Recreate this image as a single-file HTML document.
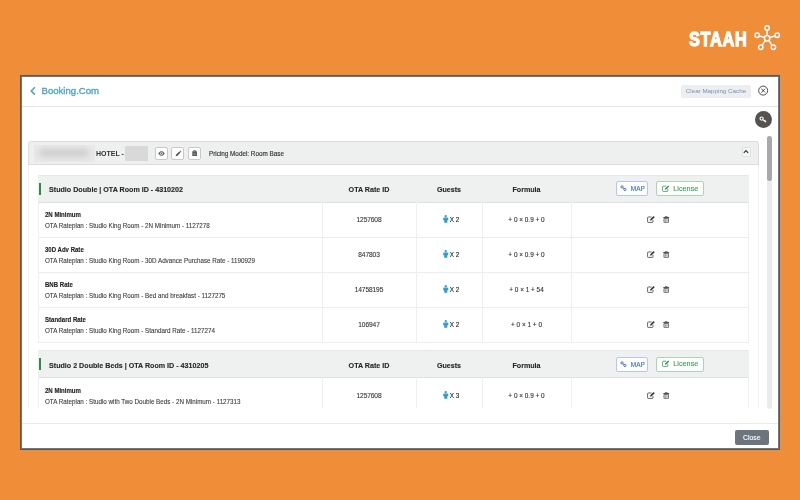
<!DOCTYPE html>
<html><head><meta charset="utf-8">
<style>
*{box-sizing:border-box;margin:0;padding:0}
html,body{width:800px;height:500px;overflow:hidden}
body{will-change:transform;background:#f08d38;font-family:"Liberation Sans",sans-serif;position:relative;color:#333}
.a{position:absolute}
.t{position:absolute;white-space:nowrap;line-height:10px;height:10px}
.bold{font-weight:bold}
.c{text-align:center}
.hl{position:absolute;height:1px;background:#ededee}
.vl{position:absolute;width:1px;background:#ededed}
.sub{font-size:6.7px;color:#3a3a3a;-webkit-text-stroke:0.1px #3a3a3a;transform:scaleX(0.936);transform-origin:0 0}
.nm{font-weight:bold;font-size:6.5px;color:#222;-webkit-text-stroke:0.12px #222;transform:scaleX(0.93);transform-origin:0 0}
.th{font-weight:bold;font-size:7.8px;color:#262626;-webkit-text-stroke:0.12px #262626;transform:scaleX(0.915);transform-origin:0 0}
.th.c{transform-origin:50% 0}
.num{font-size:6.6px;letter-spacing:-0.1px;color:#333;-webkit-text-stroke:0.1px #333}
.ib{position:absolute;width:13px;height:13px;border:1px solid #c9c9c9;border-radius:2px;background:#fff;top:147px}
</style></head>
<body>
<div id="wrap" style="position:absolute;left:0;top:0;width:800px;height:500px;filter:blur(0.3px)">
<!-- logo -->
<div class="t bold" style="left:689px;top:28.2px;height:22px;line-height:22px;font-size:20.6px;color:#fff;-webkit-text-stroke:1.3px #fff;letter-spacing:0.9px;transform-origin:0 0;transform:scaleX(0.79)">STAAH</div>
<svg class="a" style="left:753px;top:24px" width="28" height="28" viewBox="0 0 28 28">
 <g fill="none" stroke="#fff" stroke-width="1.5">
  <circle cx="14.1" cy="14.2" r="2.7"/>
  <circle cx="14.1" cy="4" r="2.2"/>
  <circle cx="4.2" cy="11.3" r="2.2"/>
  <circle cx="24.2" cy="11.3" r="2.2"/>
  <circle cx="7.8" cy="23.2" r="2.2"/>
  <circle cx="20.4" cy="23.2" r="2.2"/>
  <path d="M14.1 6.2V11.5M6.3 12L11.5 13.4M22.1 12L16.7 13.4M9.1 21.4L12.4 16.4M19.1 21.4L15.8 16.4"/>
 </g>
</svg>

<!-- modal -->
<div class="a" style="left:22px;top:77px;width:756px;height:371px;background:#fff;box-shadow:0 0 0 1px #767676,0 0 0 2px #6b5444,0 0 0 3px #cf9462"></div>

<!-- header -->
<svg class="a" style="left:29px;top:85.6px" width="8" height="10" viewBox="0 0 8 10"><path d="M5.9 1.2L2.2 4.9L5.9 8.6" fill="none" stroke="#55a4c0" stroke-width="1.6"/></svg>
<div class="t" style="left:41.5px;top:86.1px;font-size:9.6px;color:#55a4c0;-webkit-text-stroke:0.35px #55a4c0">Booking.Com</div>
<div class="a" style="left:681px;top:85px;width:69.5px;height:12.5px;background:#eceef0;border-radius:2px"></div>
<div class="t" style="left:685.8px;top:86.1px;font-size:6.24px;color:#7890b5">Clear Mapping Cache</div>
<svg class="a" style="left:757px;top:85px" width="12" height="12" viewBox="0 0 12 12"><circle cx="6.15" cy="5.6" r="4.5" fill="none" stroke="#4a4a4a" stroke-width="1"/><path d="M4.3 3.75L8 7.45M8 3.75L4.3 7.45" stroke="#4a4a4a" stroke-width="1"/></svg>
<div class="hl" style="left:22px;top:106px;width:756px;background:#e4e5e7"></div>

<!-- key button -->
<div class="a" style="left:754.8px;top:111px;width:17px;height:17px;border-radius:50%;background:#555250"></div>
<svg class="a" style="left:758px;top:114px" width="10" height="10" viewBox="0 0 10 10"><circle cx="3.6" cy="4.6" r="1.6" fill="none" stroke="#fff" stroke-width="1.1"/><path d="M4.8 5.6L7.6 8.1M6.4 7L7.3 6.1M7.3 7.8L8.1 7" stroke="#fff" stroke-width="1.1"/></svg>

<!-- scrollbar -->
<div class="a" style="left:767px;top:136px;width:5px;height:272.5px;border-radius:3px;background:#ebebeb"></div>
<div class="a" style="left:767px;top:136px;width:5px;height:45px;border-radius:3px;background:#a9a9a9"></div>

<!-- accordion -->
<div class="a" style="left:28px;top:141px;width:731px;height:267px;border:1px solid #f1f1f1;border-bottom:none;border-radius:3px 3px 0 0"></div>
<div class="a" style="left:28px;top:141px;width:731px;height:24px;background:#eeefef;border:1px solid #dcdcdc;border-radius:3px 3px 0 0"></div>
<div class="a" style="left:34px;top:144.5px;width:61px;height:17px;background:#e3e3e3;overflow:hidden">
 <div class="a" style="left:-4px;top:-3px;width:69px;height:23px;background:#e9e9e9;filter:blur(2px)"></div>
 <div class="a" style="left:5px;top:4.5px;width:50px;height:8px;background:#cdcdcd;filter:blur(3px);border-radius:4px"></div>
</div>
<div class="t bold" style="left:96px;top:148.9px;font-size:7.03px;color:#333">HOTEL -</div>
<div class="a" style="left:125px;top:146px;width:23px;height:14.5px;background:#d9d9d9"></div>
<div class="ib" style="left:155px">
 <svg class="a" style="left:2px;top:3.2px" width="7" height="5" viewBox="0 0 7 5"><path d="M0.2 2.5C1.4 0.8 2.4 0.2 3.5 0.2S5.6 0.8 6.8 2.5C5.6 4.2 4.6 4.8 3.5 4.8S1.4 4.2 0.2 2.5Z" fill="#666"/><circle cx="3.5" cy="2.5" r="1.3" fill="#fff"/><circle cx="3.5" cy="2.5" r="0.7" fill="#666"/></svg>
</div>
<div class="ib" style="left:171px">
 <svg class="a" style="left:2.6px;top:2.2px" width="7" height="7" viewBox="0 0 7 7"><path d="M0.7 6.1L1 4.7L4.3 1.4L5.5 2.6L2.2 5.9Z" fill="#505050"/><path d="M4.7 1L5.2 0.5L6.4 1.7L5.9 2.2Z" fill="#505050"/></svg>
</div>
<div class="ib" style="left:188px">
 <svg class="a" style="left:2.9px;top:2.1px" width="6" height="7" viewBox="0 0 6 7"><path d="M1.7 1.5V0.6H3.6V1.5" fill="none" stroke="#5a5a5a" stroke-width="0.8"/><path d="M0.3 1.6Q0.3 1.3 0.6 1.3H4.7Q5 1.3 5 1.6V5.7Q5 6 4.7 6H0.6Q0.3 6 0.3 5.7Z" fill="#5a5a5a"/><path d="M1.5 3.2H3.8V4.9H1.5Z" fill="#8a8a8a"/></svg>
</div>
<div class="t" style="left:209px;top:148.5px;font-size:6.34px;color:#2e2e2e;-webkit-text-stroke:0.12px #2e2e2e">Pricing Model: Room Base</div>
<div class="a" style="left:741.5px;top:147.3px;width:9.5px;height:9.5px;border:1px solid #e0e0e0;background:#f6f6f6;border-radius:1px"></div>
<svg class="a" style="left:742px;top:148px" width="8" height="8" viewBox="0 0 8 8"><path d="M1.8 4.9L4 2.7L6.2 4.9" fill="none" stroke="#333" stroke-width="1.2"/></svg>

<!-- TABLE 1 -->
<div class="a" style="left:0;top:0;width:800px;height:408px;overflow:hidden">
<div class="a" style="left:38px;top:175px;width:711px;height:28px;background:#eff0f0"></div>
<div class="hl" style="left:38px;top:175px;width:711px;background:#e6e7e8"></div>
<div class="hl" style="left:38px;top:202px;width:711px;background:#dfe0e1"></div>
<div class="hl" style="left:38px;top:237px;width:711px"></div>
<div class="hl" style="left:38px;top:272px;width:711px"></div>
<div class="hl" style="left:38px;top:307px;width:711px"></div>
<div class="hl" style="left:38px;top:342px;width:711px"></div>
<div class="vl" style="left:38px;top:175px;height:167px;background:#eeeff1"></div>
<div class="vl" style="left:322px;top:175px;height:167px;background:#eeeff1"></div>
<div class="vl" style="left:416px;top:175px;height:167px;background:#eeeff1"></div>
<div class="vl" style="left:482px;top:175px;height:167px;background:#eeeff1"></div>
<div class="vl" style="left:571px;top:175px;height:167px;background:#eeeff1"></div>
<div class="vl" style="left:748px;top:175px;height:167px;background:#eeeff1"></div>
<div class="a" style="left:39px;top:182.5px;width:2.3px;height:12.5px;background:#2f8c3d"></div>
<div class="t th" style="left:49px;top:185.05px">Studio Double | OTA Room ID - 4310202</div>
<div class="t th c" style="left:322px;width:94px;top:185.05px">OTA Rate ID</div>
<div class="t th c" style="left:416px;width:66px;top:185.05px">Guests</div>
<div class="t th c" style="left:482px;width:89px;top:185.05px">Formula</div>
<div class="a" style="left:616px;top:181px;width:32px;height:15.3px;border:1px solid #b3c8ea;border-radius:2px;background:#fff"></div>
<svg class="a" style="left:619.5px;top:185.3px" width="7" height="7" viewBox="0 0 7 7"><g fill="none" stroke="#4b74c2" stroke-width="1.0"><circle cx="2.0" cy="1.9" r="1.1"/><circle cx="4.9" cy="4.5" r="1.1"/><path d="M2.8 2.7L4.1 3.8"/></g></svg>
<div class="t" style="left:630.8px;top:184.05px;font-size:6.46px;color:#3f6cc8;-webkit-text-stroke:0.12px #3f6cc8">MAP</div>
<div class="a" style="left:656px;top:181px;width:48px;height:15.3px;border:1px solid #aad6b5;border-radius:2px;background:#fff"></div>
<svg class="a" style="left:661.5px;top:184.6px" width="8" height="7" viewBox="0 0 8 7"><path d="M4.2 1.2H1.2Q0.6 1.2 0.6 1.8V5.8Q0.6 6.4 1.2 6.4H5.2Q5.8 6.4 5.8 5.8V3.6" fill="none" stroke="#5a9a6a" stroke-width="0.9"/><path d="M2.8 4.8L3.1 3.6L6.2 0.5L7.2 1.5L4.1 4.6Z" fill="#3c8d50"/></svg>
<div class="t" style="left:673.3px;top:183.5px;font-size:7.25px;color:#3f9854;-webkit-text-stroke:0.1px #3f9854">License</div>
<div class="t nm" style="left:45px;top:209.9px">2N Minimum</div>
<div class="t sub" style="left:45px;top:220.7px">OTA Rateplan : Studio King Room - 2N Minimum - 1127278</div>
<div class="t c num" style="left:322px;width:94px;top:214.8px">1257608</div>
<svg class="a" style="left:442.6px;top:215.2px" width="6" height="8" viewBox="0 0 6 8"><circle cx="2.75" cy="1.2" r="1.15" fill="#2f9fd0"/><path d="M1.3 2.6H4.2Q5.3 2.6 5.3 3.6V5.3H4.3V7.7H1.2V5.3H0.2V3.6Q0.2 2.6 1.3 2.6Z" fill="#2f9fd0"/></svg>
<div class="t" style="left:449.7px;top:214.8px;font-size:6.3px;color:#222;-webkit-text-stroke:0.12px #222">X 2</div>
<div class="t c" style="left:482px;width:89px;top:214.8px;font-size:6.45px;color:#333;-webkit-text-stroke:0.12px #333">+ 0 × 0.9 + 0</div>
<svg class="a" style="left:647px;top:216px" width="9" height="7" viewBox="0 0 9 7"><path d="M4.6 1H1.2Q0.6 1 0.6 1.6V5.8Q0.6 6.4 1.2 6.4H5.4Q6 6.4 6 5.8V3.8" fill="none" stroke="#555" stroke-width="0.9"/><path d="M2.9 4.6L3.2 3.4L6.6 0.1L7.7 1.2L4.3 4.5Z" fill="#333"/></svg>
<svg class="a" style="left:663px;top:216px" width="6.5" height="7" viewBox="0 0 6.5 7"><path d="M2.2 0.9V0.4H4.2V0.9" fill="none" stroke="#444" stroke-width="0.7"/><path d="M0.3 1.1H6.1V2H0.3Z" fill="#444"/><path d="M1 2.4H5.4V6.2Q5.4 6.7 4.9 6.7H1.5Q1 6.7 1 6.2Z" fill="none" stroke="#444" stroke-width="0.8"/><path d="M2.5 3.2V5.8M3.9 3.2V5.8" stroke="#444" stroke-width="0.55"/></svg>
<div class="t nm" style="left:45px;top:244.9px">30D Adv Rate</div>
<div class="t sub" style="left:45px;top:255.7px">OTA Rateplan : Studio King Room - 30D Advance Purchase Rate - 1190929</div>
<div class="t c num" style="left:322px;width:94px;top:249.8px">847803</div>
<svg class="a" style="left:442.6px;top:250.2px" width="6" height="8" viewBox="0 0 6 8"><circle cx="2.75" cy="1.2" r="1.15" fill="#2f9fd0"/><path d="M1.3 2.6H4.2Q5.3 2.6 5.3 3.6V5.3H4.3V7.7H1.2V5.3H0.2V3.6Q0.2 2.6 1.3 2.6Z" fill="#2f9fd0"/></svg>
<div class="t" style="left:449.7px;top:249.8px;font-size:6.3px;color:#222;-webkit-text-stroke:0.12px #222">X 2</div>
<div class="t c" style="left:482px;width:89px;top:249.8px;font-size:6.45px;color:#333;-webkit-text-stroke:0.12px #333">+ 0 × 0.9 + 0</div>
<svg class="a" style="left:647px;top:251px" width="9" height="7" viewBox="0 0 9 7"><path d="M4.6 1H1.2Q0.6 1 0.6 1.6V5.8Q0.6 6.4 1.2 6.4H5.4Q6 6.4 6 5.8V3.8" fill="none" stroke="#555" stroke-width="0.9"/><path d="M2.9 4.6L3.2 3.4L6.6 0.1L7.7 1.2L4.3 4.5Z" fill="#333"/></svg>
<svg class="a" style="left:663px;top:251px" width="6.5" height="7" viewBox="0 0 6.5 7"><path d="M2.2 0.9V0.4H4.2V0.9" fill="none" stroke="#444" stroke-width="0.7"/><path d="M0.3 1.1H6.1V2H0.3Z" fill="#444"/><path d="M1 2.4H5.4V6.2Q5.4 6.7 4.9 6.7H1.5Q1 6.7 1 6.2Z" fill="none" stroke="#444" stroke-width="0.8"/><path d="M2.5 3.2V5.8M3.9 3.2V5.8" stroke="#444" stroke-width="0.55"/></svg>
<div class="t nm" style="left:45px;top:279.9px">BNB Rate</div>
<div class="t sub" style="left:45px;top:290.7px">OTA Rateplan : Studio King Room - Bed and breakfast - 1127275</div>
<div class="t c num" style="left:322px;width:94px;top:284.8px">14758195</div>
<svg class="a" style="left:442.6px;top:285.2px" width="6" height="8" viewBox="0 0 6 8"><circle cx="2.75" cy="1.2" r="1.15" fill="#2f9fd0"/><path d="M1.3 2.6H4.2Q5.3 2.6 5.3 3.6V5.3H4.3V7.7H1.2V5.3H0.2V3.6Q0.2 2.6 1.3 2.6Z" fill="#2f9fd0"/></svg>
<div class="t" style="left:449.7px;top:284.8px;font-size:6.3px;color:#222;-webkit-text-stroke:0.12px #222">X 2</div>
<div class="t c" style="left:482px;width:89px;top:284.8px;font-size:6.45px;color:#333;-webkit-text-stroke:0.12px #333">+ 0 × 1 + 54</div>
<svg class="a" style="left:647px;top:286px" width="9" height="7" viewBox="0 0 9 7"><path d="M4.6 1H1.2Q0.6 1 0.6 1.6V5.8Q0.6 6.4 1.2 6.4H5.4Q6 6.4 6 5.8V3.8" fill="none" stroke="#555" stroke-width="0.9"/><path d="M2.9 4.6L3.2 3.4L6.6 0.1L7.7 1.2L4.3 4.5Z" fill="#333"/></svg>
<svg class="a" style="left:663px;top:286px" width="6.5" height="7" viewBox="0 0 6.5 7"><path d="M2.2 0.9V0.4H4.2V0.9" fill="none" stroke="#444" stroke-width="0.7"/><path d="M0.3 1.1H6.1V2H0.3Z" fill="#444"/><path d="M1 2.4H5.4V6.2Q5.4 6.7 4.9 6.7H1.5Q1 6.7 1 6.2Z" fill="none" stroke="#444" stroke-width="0.8"/><path d="M2.5 3.2V5.8M3.9 3.2V5.8" stroke="#444" stroke-width="0.55"/></svg>
<div class="t nm" style="left:45px;top:314.9px">Standard Rate</div>
<div class="t sub" style="left:45px;top:325.7px">OTA Rateplan : Studio King Room - Standard Rate - 1127274</div>
<div class="t c num" style="left:322px;width:94px;top:319.8px">106947</div>
<svg class="a" style="left:442.6px;top:320.2px" width="6" height="8" viewBox="0 0 6 8"><circle cx="2.75" cy="1.2" r="1.15" fill="#2f9fd0"/><path d="M1.3 2.6H4.2Q5.3 2.6 5.3 3.6V5.3H4.3V7.7H1.2V5.3H0.2V3.6Q0.2 2.6 1.3 2.6Z" fill="#2f9fd0"/></svg>
<div class="t" style="left:449.7px;top:319.8px;font-size:6.3px;color:#222;-webkit-text-stroke:0.12px #222">X 2</div>
<div class="t c" style="left:482px;width:89px;top:319.8px;font-size:6.45px;color:#333;-webkit-text-stroke:0.12px #333">+ 0 × 1 + 0</div>
<svg class="a" style="left:647px;top:321px" width="9" height="7" viewBox="0 0 9 7"><path d="M4.6 1H1.2Q0.6 1 0.6 1.6V5.8Q0.6 6.4 1.2 6.4H5.4Q6 6.4 6 5.8V3.8" fill="none" stroke="#555" stroke-width="0.9"/><path d="M2.9 4.6L3.2 3.4L6.6 0.1L7.7 1.2L4.3 4.5Z" fill="#333"/></svg>
<svg class="a" style="left:663px;top:321px" width="6.5" height="7" viewBox="0 0 6.5 7"><path d="M2.2 0.9V0.4H4.2V0.9" fill="none" stroke="#444" stroke-width="0.7"/><path d="M0.3 1.1H6.1V2H0.3Z" fill="#444"/><path d="M1 2.4H5.4V6.2Q5.4 6.7 4.9 6.7H1.5Q1 6.7 1 6.2Z" fill="none" stroke="#444" stroke-width="0.8"/><path d="M2.5 3.2V5.8M3.9 3.2V5.8" stroke="#444" stroke-width="0.55"/></svg>
<div class="a" style="left:38px;top:350px;width:711px;height:28px;background:#eff0f0"></div>
<div class="hl" style="left:38px;top:350px;width:711px;background:#e6e7e8"></div>
<div class="hl" style="left:38px;top:377px;width:711px;background:#dfe0e1"></div>
<div class="vl" style="left:38px;top:350px;height:58px;background:#eeeff1"></div>
<div class="vl" style="left:322px;top:350px;height:58px;background:#eeeff1"></div>
<div class="vl" style="left:416px;top:350px;height:58px;background:#eeeff1"></div>
<div class="vl" style="left:482px;top:350px;height:58px;background:#eeeff1"></div>
<div class="vl" style="left:571px;top:350px;height:58px;background:#eeeff1"></div>
<div class="vl" style="left:748px;top:350px;height:58px;background:#eeeff1"></div>
<div class="a" style="left:39px;top:357.5px;width:2.3px;height:12.5px;background:#2f8c3d"></div>
<div class="t th" style="left:49px;top:360.85px">Studio 2 Double Beds | OTA Room ID - 4310205</div>
<div class="t th c" style="left:322px;width:94px;top:360.85px">OTA Rate ID</div>
<div class="t th c" style="left:416px;width:66px;top:360.85px">Guests</div>
<div class="t th c" style="left:482px;width:89px;top:360.85px">Formula</div>
<div class="a" style="left:616px;top:356.8px;width:32px;height:15.3px;border:1px solid #b3c8ea;border-radius:2px;background:#fff"></div>
<svg class="a" style="left:619.5px;top:361.1px" width="7" height="7" viewBox="0 0 7 7"><g fill="none" stroke="#4b74c2" stroke-width="1.0"><circle cx="2.0" cy="1.9" r="1.1"/><circle cx="4.9" cy="4.5" r="1.1"/><path d="M2.8 2.7L4.1 3.8"/></g></svg>
<div class="t" style="left:630.8px;top:359.85px;font-size:6.46px;color:#3f6cc8;-webkit-text-stroke:0.12px #3f6cc8">MAP</div>
<div class="a" style="left:656px;top:356.8px;width:48px;height:15.3px;border:1px solid #aad6b5;border-radius:2px;background:#fff"></div>
<svg class="a" style="left:661.5px;top:360.40000000000003px" width="8" height="7" viewBox="0 0 8 7"><path d="M4.2 1.2H1.2Q0.6 1.2 0.6 1.8V5.8Q0.6 6.4 1.2 6.4H5.2Q5.8 6.4 5.8 5.8V3.6" fill="none" stroke="#5a9a6a" stroke-width="0.9"/><path d="M2.8 4.8L3.1 3.6L6.2 0.5L7.2 1.5L4.1 4.6Z" fill="#3c8d50"/></svg>
<div class="t" style="left:673.3px;top:359.3px;font-size:7.25px;color:#3f9854;-webkit-text-stroke:0.1px #3f9854">License</div>
<div class="t nm" style="left:45px;top:385.7px">2N Minimum</div>
<div class="t sub" style="left:45px;top:396.5px">OTA Rateplan : Studio with Two Double Beds - 2N Minimum - 1127313</div>
<div class="t c num" style="left:322px;width:94px;top:390.6px">1257608</div>
<svg class="a" style="left:442.6px;top:391.0px" width="6" height="8" viewBox="0 0 6 8"><circle cx="2.75" cy="1.2" r="1.15" fill="#2f9fd0"/><path d="M1.3 2.6H4.2Q5.3 2.6 5.3 3.6V5.3H4.3V7.7H1.2V5.3H0.2V3.6Q0.2 2.6 1.3 2.6Z" fill="#2f9fd0"/></svg>
<div class="t" style="left:449.7px;top:390.6px;font-size:6.3px;color:#222;-webkit-text-stroke:0.12px #222">X 3</div>
<div class="t c" style="left:482px;width:89px;top:390.6px;font-size:6.45px;color:#333;-webkit-text-stroke:0.12px #333">+ 0 × 0.9 + 0</div>
<svg class="a" style="left:647px;top:391.8px" width="9" height="7" viewBox="0 0 9 7"><path d="M4.6 1H1.2Q0.6 1 0.6 1.6V5.8Q0.6 6.4 1.2 6.4H5.4Q6 6.4 6 5.8V3.8" fill="none" stroke="#555" stroke-width="0.9"/><path d="M2.9 4.6L3.2 3.4L6.6 0.1L7.7 1.2L4.3 4.5Z" fill="#333"/></svg>
<svg class="a" style="left:663px;top:391.8px" width="6.5" height="7" viewBox="0 0 6.5 7"><path d="M2.2 0.9V0.4H4.2V0.9" fill="none" stroke="#444" stroke-width="0.7"/><path d="M0.3 1.1H6.1V2H0.3Z" fill="#444"/><path d="M1 2.4H5.4V6.2Q5.4 6.7 4.9 6.7H1.5Q1 6.7 1 6.2Z" fill="none" stroke="#444" stroke-width="0.8"/><path d="M2.5 3.2V5.8M3.9 3.2V5.8" stroke="#444" stroke-width="0.55"/></svg>
</div>

<!-- footer -->
<div class="hl" style="left:22px;top:423px;width:756px;background:#ebebeb"></div>
<div class="a" style="left:735px;top:429.5px;width:33.5px;height:15.5px;background:#6c757d;border-radius:2px"></div>
<div class="t" style="left:735px;width:33.5px;text-align:center;top:432.8px;font-size:6.9px;color:#fff;-webkit-text-stroke:0.1px #fff">Close</div>
</div>
</body></html>
